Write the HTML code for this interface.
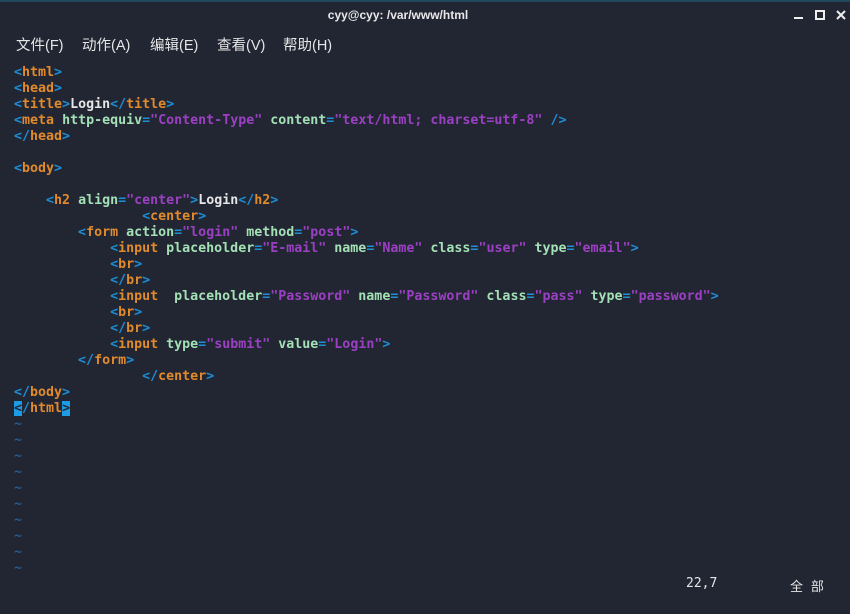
<!DOCTYPE html>
<html><head><meta charset="utf-8"><style>
body{margin:0;width:850px;height:614px;background:#222633;overflow:hidden;position:relative;font-family:"Liberation Sans","Noto Sans CJK SC",sans-serif}
.top{position:absolute;left:0;top:0;width:850px;height:2px;background:#1e4a5c}
.title{position:absolute;top:8px;left:0;width:796px;text-align:center;color:#e8e8e8;font-size:12px;font-weight:bold}
.menu{position:absolute;top:34px;left:16px;color:#e6e6e6;font-size:14.5px;white-space:nowrap}
.menu span{position:absolute;top:0}
pre{position:absolute;left:14px;top:65px;margin:0;font-family:"DejaVu Sans Mono",monospace;font-size:13.3px;line-height:16px;font-weight:bold;color:#e6e6e6}
.b{color:#1d8fd8}.t{color:#e08a2e}.a{color:#a4e0b6}.s{color:#9b40c2}.tl{color:#2a5a8a}
.cur{background:#1d9be6;color:#222633}
.st{position:absolute;top:576px;color:#e6e6e6;font-size:13px;font-family:"DejaVu Sans Mono","Noto Sans CJK SC",monospace}
</style></head><body>
<div class="top"></div>
<div class="title">cyy@cyy: /var/www/html</div>
<svg style="position:absolute;left:790px;top:8px" width="60" height="14"><rect x="4" y="9" width="9" height="2" fill="#eee"/><rect x="26" y="3" width="8" height="8" fill="none" stroke="#eee" stroke-width="2"/><path d="M47 3l8 8M55 3l-8 8" stroke="#eee" stroke-width="2"/></svg>
<div class="menu"><span style="left:0">文件(F)</span><span style="left:66px">动作(A)</span><span style="left:134px">编辑(E)</span><span style="left:201px">查看(V)</span><span style="left:267px">帮助(H)</span></div>
<pre><span class="b">&lt;</span><span class="t">html</span><span class="b">&gt;</span>
<span class="b">&lt;</span><span class="t">head</span><span class="b">&gt;</span>
<span class="b">&lt;</span><span class="t">title</span><span class="b">&gt;</span>Login<span class="b">&lt;/</span><span class="t">title</span><span class="b">&gt;</span>
<span class="b">&lt;</span><span class="t">meta</span> <span class="a">http-equiv</span><span class="b">=</span><span class="s">"Content-Type"</span> <span class="a">content</span><span class="b">=</span><span class="s">"text/html; charset=utf-8"</span> <span class="b">/&gt;</span>
<span class="b">&lt;/</span><span class="t">head</span><span class="b">&gt;</span>

<span class="b">&lt;</span><span class="t">body</span><span class="b">&gt;</span>

    <span class="b">&lt;</span><span class="t">h2</span> <span class="a">align</span><span class="b">=</span><span class="s">"center"</span><span class="b">&gt;</span>Login<span class="b">&lt;/</span><span class="t">h2</span><span class="b">&gt;</span>
                <span class="b">&lt;</span><span class="t">center</span><span class="b">&gt;</span>
        <span class="b">&lt;</span><span class="t">form</span> <span class="a">action</span><span class="b">=</span><span class="s">"login"</span> <span class="a">method</span><span class="b">=</span><span class="s">"post"</span><span class="b">&gt;</span>
            <span class="b">&lt;</span><span class="t">input</span> <span class="a">placeholder</span><span class="b">=</span><span class="s">"E-mail"</span> <span class="a">name</span><span class="b">=</span><span class="s">"Name"</span> <span class="a">class</span><span class="b">=</span><span class="s">"user"</span> <span class="a">type</span><span class="b">=</span><span class="s">"email"</span><span class="b">&gt;</span>
            <span class="b">&lt;</span><span class="t">br</span><span class="b">&gt;</span>
            <span class="b">&lt;/</span><span class="t">br</span><span class="b">&gt;</span>
            <span class="b">&lt;</span><span class="t">input</span>  <span class="a">placeholder</span><span class="b">=</span><span class="s">"Password"</span> <span class="a">name</span><span class="b">=</span><span class="s">"Password"</span> <span class="a">class</span><span class="b">=</span><span class="s">"pass"</span> <span class="a">type</span><span class="b">=</span><span class="s">"password"</span><span class="b">&gt;</span>
            <span class="b">&lt;</span><span class="t">br</span><span class="b">&gt;</span>
            <span class="b">&lt;/</span><span class="t">br</span><span class="b">&gt;</span>
            <span class="b">&lt;</span><span class="t">input</span> <span class="a">type</span><span class="b">=</span><span class="s">"submit"</span> <span class="a">value</span><span class="b">=</span><span class="s">"Login"</span><span class="b">&gt;</span>
        <span class="b">&lt;/</span><span class="t">form</span><span class="b">&gt;</span>
                <span class="b">&lt;/</span><span class="t">center</span><span class="b">&gt;</span>
<span class="b">&lt;/</span><span class="t">body</span><span class="b">&gt;</span>
<span class="cur">&lt;</span><span class="b">/</span><span class="t">html</span><span class="cur">&gt;</span>
<span class="tl">~
~
~
~
~
~
~
~
~
~</span></pre>
<div class="st" style="left:686px">22,7</div>
<div class="st" style="left:790px">全 部</div>
</body></html>
